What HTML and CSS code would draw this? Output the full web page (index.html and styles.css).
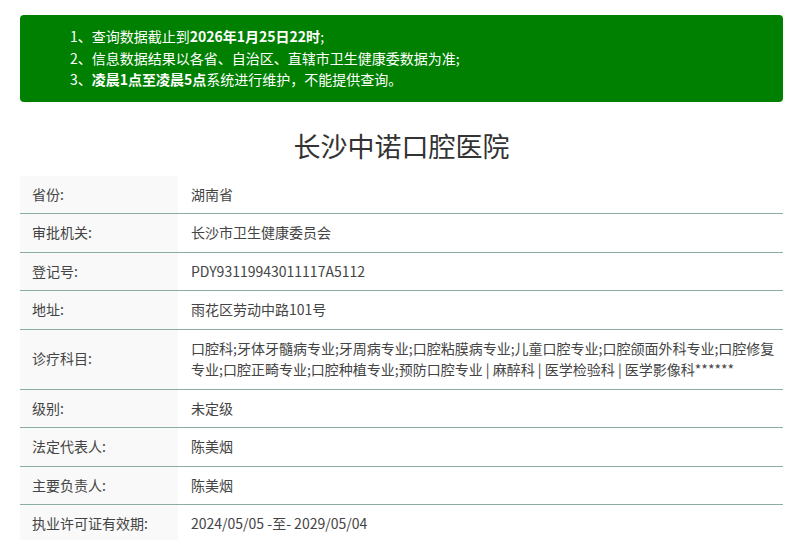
FILE: index.html
```html
<!DOCTYPE html>
<html lang="zh-CN">
<head>
<meta charset="utf-8">
<title>长沙中诺口腔医院</title>
<link rel="stylesheet" href="styles.css">
</head>
<body>
<div class="wrap">
  <div class="notice">
    <p>1、查询数据截止到<b>2026年1月25日22时</b>;</p>
    <p>2、信息数据结果以各省、自治区、直辖市卫生健康委数据为准;</p>
    <p>3、<b>凌晨1点至凌晨5点</b>系统进行维护，不能提供查询。</p>
  </div>
  <h1 class="title">长沙中诺口腔医院</h1>
  <table class="info">
    <tr><th>省份:</th><td>湖南省</td></tr>
    <tr><th>审批机关:</th><td>长沙市卫生健康委员会</td></tr>
    <tr><th>登记号:</th><td>PDY93119943011117A5112</td></tr>
    <tr><th>地址:</th><td>雨花区劳动中路101号</td></tr>
    <tr><th>诊疗科目:</th><td>口腔科;牙体牙髓病专业;牙周病专业;口腔粘膜病专业;儿童口腔专业;口腔颌面外科专业;口腔修复专业;口腔正畸专业;口腔种植专业;预防口腔专业 | 麻醉科 | 医学检验科 | 医学影像科******</td></tr>
    <tr><th>级别:</th><td>未定级</td></tr>
    <tr><th>法定代表人:</th><td>陈美烟</td></tr>
    <tr><th>主要负责人:</th><td>陈美烟</td></tr>
    <tr><th>执业许可证有效期:</th><td>2024/05/05 -至- 2029/05/04</td></tr>
  </table>
</div>
</body>
</html>
```

FILE: styles.css
```css
html, body {
  margin: 0;
  padding: 0;
  background: #ffffff;
}
body {
  font-family: "Noto Sans CJK SC", "Noto Sans", sans-serif;
  color: #333333;
  font-size: 14px;
}
.wrap {
  width: 763px;
  margin-left: 20px;
  padding-top: 15px;
}
.notice {
  background: #008000;
  color: #ffffff;
  border-radius: 4px;
  padding: 11px 20px 11px 50px;
}
.notice p {
  margin: 0;
  line-height: 21.5px;
}
.notice b {
  font-weight: 700;
}
.title {
  text-align: center;
  font-size: 27px;
  font-weight: 400;
  line-height: 36px;
  margin: 26px 0 12px;
  color: #333333;
}
.info {
  width: 100%;
  border-collapse: collapse;
  color: #444444;
}
.info th,
.info td {
  text-align: left;
  font-weight: 400;
  line-height: 21.5px;
  padding: 8px 8px 8px 13px;
  border-bottom: 1px solid #8aaca4;
  vertical-align: middle;
}
.info th {
  width: 158px;
  box-sizing: border-box;
  padding-left: 12px;
  background: #f9f9f9;
  white-space: nowrap;
}
.info tr:last-child th,
.info tr:last-child td {
  border-bottom: none;
}
```
